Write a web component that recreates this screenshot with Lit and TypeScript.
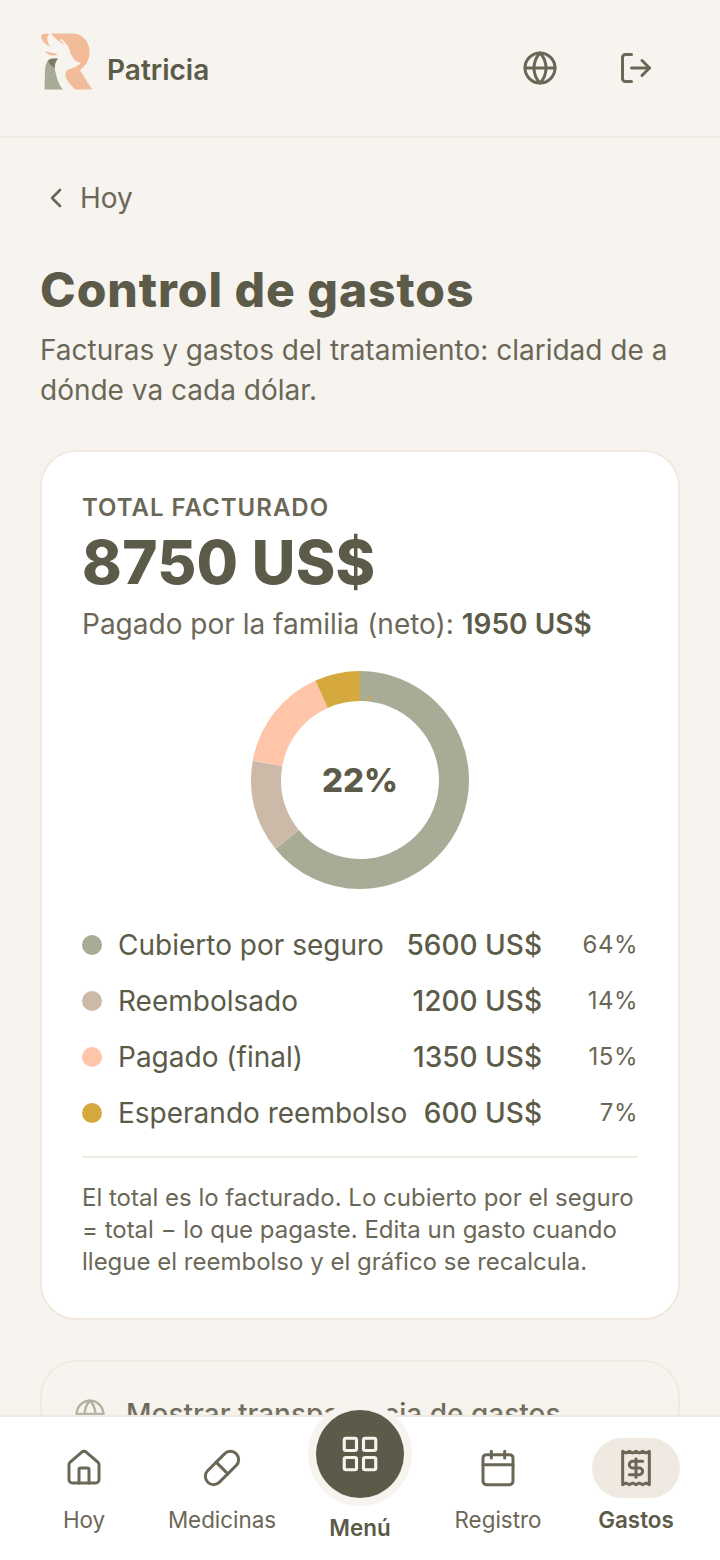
import { LitElement, html, css, svg } from "lit";
import { customElement } from "lit/decorators.js";

const ic = (size: number, body: unknown, sw = 2) => html`<svg width=${size} height=${size} viewBox="0 0 24 24" fill="none" stroke="currentColor" stroke-width=${sw} stroke-linecap="round" stroke-linejoin="round">${body}</svg>`;

const globe = svg`<circle cx="12" cy="12" r="10"/><path d="M12 2a14.5 14.5 0 0 0 0 20 14.5 14.5 0 0 0 0-20"/><path d="M2 12h20"/>`;
const logout = svg`<path d="M9 21H5a2 2 0 0 1-2-2V5a2 2 0 0 1 2-2h4"/><path d="m16 17 5-5-5-5"/><path d="M21 12H9"/>`;
const chevron = svg`<path d="m15 18-6-6 6-6"/>`;
const house = svg`<path d="M15 21v-8a1 1 0 0 0-1-1h-4a1 1 0 0 0-1 1v8"/><path d="M3 10a2 2 0 0 1 .709-1.528l7-5.999a2 2 0 0 1 2.582 0l7 5.999A2 2 0 0 1 21 10v9a2 2 0 0 1-2 2H5a2 2 0 0 1-2-2z"/>`;
const pill = svg`<path d="m10.5 20.5 10-10a4.95 4.95 0 1 0-7-7l-10 10a4.95 4.95 0 1 0 7 7Z"/><path d="m8.5 8.5 7 7"/>`;
const grid = svg`<rect width="7" height="7" x="3" y="3" rx="1"/><rect width="7" height="7" x="14" y="3" rx="1"/><rect width="7" height="7" x="14" y="14" rx="1"/><rect width="7" height="7" x="3" y="14" rx="1"/>`;
const calendar = svg`<path d="M8 2v4"/><path d="M16 2v4"/><rect width="18" height="18" x="3" y="4" rx="2"/><path d="M3 10h18"/>`;
const receipt = svg`<path d="M4 2v20l2-1 2 1 2-1 2 1 2-1 2 1 2-1 2 1V2l-2 1-2-1-2 1-2-1-2 1-2-1-2 1Z"/><path d="M16 8h-6a2 2 0 1 0 0 4h4a2 2 0 1 1 0 4H8"/><path d="M12 17.5v-11"/>`;

const rows = [
  { label: "Cubierto por seguro", amount: "5600 US$", value: 5600, pct: 64, color: "#a8ab95" },
  { label: "Reembolsado", amount: "1200 US$", value: 1200, pct: 14, color: "#cdb9a8" },
  { label: "Pagado (final)", amount: "1350 US$", value: 1350, pct: 15, color: "#fec5a8" },
  { label: "Esperando reembolso", amount: "600 US$", value: 600, pct: 7, color: "#d6a93f" },
];

@customElement("app-root")
export class AppRoot extends LitElement {
  static styles = css`
    :host { display: flex; flex-direction: column; width: 720px; height: 1560px; overflow: hidden; background: #f7f4ef; color: #5c5a48; font-family: Inter, "Liberation Sans", sans-serif; }
    * { box-sizing: border-box; }
    svg { display: block; flex: none; }
    header { flex: none; height: 138px; border-bottom: 2px solid #f0e9e1; display: flex; align-items: center; padding: 0 48px 0 40px; }
    .brand { flex: 1; display: flex; align-items: center; gap: 14px; }
    .name { font-size: 28px; font-weight: 600; line-height: 36px; margin-top: 3px; }
    .actions { display: flex; gap: 24px; color: #6b6757; }
    .btn { width: 72px; height: 72px; display: flex; align-items: center; justify-content: center; }
    main { flex: 1; min-height: 0; overflow: hidden; padding: 36px 40px 0; position: relative; }
    main::after { content: ""; position: absolute; left: 0; right: 0; bottom: 0; height: 20px; background: linear-gradient(rgba(240,233,225,0), rgba(240,233,225,.2)); }
    .back { height: 48px; display: flex; align-items: center; gap: 8px; font-size: 28px; color: #6b6757; }
    h1 { margin: 38px 0 0; font-size: 48px; line-height: 60px; font-weight: 800; letter-spacing: 0.95px; }
    .sub { margin: 10px 0 0; font-size: 28px; line-height: 40px; color: #6b6757; }
    .card { margin-top: 40px; border: 2px solid #f0e9e1; border-radius: 36px; background: #fff; padding: 40px; }
    .eyebrow { font-size: 24px; line-height: 30px; font-weight: 600; letter-spacing: 1px; color: #6b6757; margin-top: 1px; }
    .total { margin-top: 5px; font-size: 60px; line-height: 68px; font-weight: 800; letter-spacing: 0.3px; }
    .paid { margin-top: 10px; font-size: 28px; line-height: 36px; color: #6b6757; }
    .paid b { font-weight: 600; color: #5c5a48; }
    .donut { position: relative; width: 220px; height: 220px; margin: 28px auto 0; }
    .donut span { position: absolute; inset: 0; display: flex; align-items: center; justify-content: center; font-size: 33px; font-weight: 800; }
    .legend { margin-top: 35px; display: flex; flex-direction: column; gap: 16px; }
    .row { height: 40px; display: flex; align-items: center; }
    .dot { width: 20px; height: 20px; border-radius: 50%; margin-right: 16px; flex: none; }
    .label { flex: 1; font-size: 28px; line-height: 38px; white-space: nowrap; }
    .amount { font-size: 28px; line-height: 38px; font-weight: 500; white-space: nowrap; }
    .pct { width: 96px; text-align: right; font-size: 24px; line-height: 38px; letter-spacing: .5px; color: #6b6757; }
    .note { margin-top: 23px; border-top: 2px solid #f0e9e1; padding-top: 24px; font-size: 24px; line-height: 32px; color: #6b6757; }
    .card2 { background: transparent; padding: 32px; display: flex; gap: 20px; height: 200px; align-items: flex-start; }
    .card2 .gl { color: #a8ab95; margin-top: 4px; }
    .card2 div { font-size: 28px; font-weight: 500; line-height: 40px; white-space: nowrap; }
    nav { flex: none; height: 145px; background: #fff; border-top: 2px solid #f0e9e1; padding: 21px 15px 0; display: grid; grid-template-columns: repeat(5, 138px); position: relative; z-index: 1; }
    .item { display: flex; flex-direction: column; align-items: center; font-size: 22.4px; line-height: 28px; color: #6b6757; white-space: nowrap; }
    .pillbox { width: 88px; height: 60px; border-radius: 30px; display: flex; align-items: center; justify-content: center; margin-bottom: 8px; }
    .on { font-weight: 600; color: #5c5a48; }
    .on .pillbox { background: #f0e9e1; color: #6b6757; }
    .fab { width: 88px; height: 88px; border-radius: 50%; background: #5c5a48; box-shadow: 0 0 0 8px #f7f4ef; color: #f7f4ef; display: flex; align-items: center; justify-content: center; margin: -28px 0 16px; }
  `;

  render() {
    let off = 0;
    const c = 2 * Math.PI * 94;
    return html`
      <header>
        <div class="brand">
          <svg width="53" height="72" viewBox="40 32 53 72">
            <defs>
              <pattern id="dots" width="3" height="3" patternUnits="userSpaceOnUse"><circle cx="1.5" cy="1.5" r=".55" fill="#c9c2a6"/></pattern>
            </defs>
            <path fill="#f4bb99" d="M51 33.500L72 33.500C82 33.500 89.500 41 89.500 52C89.500 61 85 66 80 70L92 89.500L75 89.500C71 85 66.500 81 65.500 76C65 72 67 69.500 70 69C74 68 78 66 81 63C77 62 74 60 72 56C70 53 68.500 50 68 47C63 44 55 39 51 33.500Z"/>
            <path fill="url(#dots)" d="M55 33.500L72 33.500C80 33.500 85 37 87 43C78 45 68 46 63 42C59 39 57 36 55 33.500ZM72 78L80 71L92 89.500L75 89.500Z"/>
            <path fill="none" stroke="#f7f4ef" stroke-width="1.600" stroke-linecap="round" d="M50 36C56 41 61 46 66 52M61 40C65 43 68 46 69.500 52"/>
            <path fill="#f4bb99" d="M41 35.500C42 34 46 33.500 49.500 34C46 36.500 47 41 50 46.500C46 45 40.500 40 41 35.500ZM45 51.500C49 52.500 54 52.500 58 54.500C54 56.500 48 55.500 45 51.500Z"/>
            <path fill="#a8ab95" d="M44.500 89.500L45 70C45.500 63 48 58.500 52 58.500L58 58.500C55 62 54 68 56 74C57 80 60 86 63 89.500Z"/>
            <path fill="#7d7a68" d="M48 61C50 58.500 54 58.500 58 58.500C55.500 61 54.500 64 54.500 68C52 66 49 64 48 61Z"/>
          </svg>
          <span class="name">Patricia</span>
        </div>
        <div class="actions">
          <div class="btn">${ic(36, globe, 2)}</div>
          <div class="btn">${ic(36, logout, 2)}</div>
        </div>
      </header>
      <main>
        <div class="back">${ic(32, chevron, 2)}<span>Hoy</span></div>
        <h1>Control de gastos</h1>
        <p class="sub">Facturas y gastos del tratamiento: claridad de a dónde va cada dólar.</p>
        <section class="card">
          <div class="eyebrow">TOTAL FACTURADO</div>
          <div class="total">8750 US$</div>
          <div class="paid">Pagado por la familia (neto): <b>1950 US$</b></div>
          <div class="donut">
            <svg width="220" height="220" viewBox="0 0 220 220">
              <g transform="rotate(-90 110 110)">
              ${rows.map((r) => {
                const len = (r.value / 8750) * c;
                const el = svg`<circle cx="110" cy="110" r="94" fill="none" stroke=${r.color} stroke-width="30" stroke-dasharray="${len} ${c - len}" stroke-dashoffset=${-off} />`;
                off += len;
                return el;
              })}
              </g>
              <path fill="#d6a93f" d="M115 31L117.500 28.500L121 25L119.500 30Z"/>
            </svg>
            <span>22%</span>
          </div>
          <div class="legend">
            ${rows.map((r) => html`<div class="row"><i class="dot" style="background:${r.color}"></i><span class="label">${r.label}</span><span class="amount">${r.amount}</span><span class="pct">${r.pct}%</span></div>`)}
          </div>
          <div class="note">El total es lo facturado. Lo cubierto por el seguro = total − lo que pagaste. Edita un gasto cuando llegue el reembolso y el gráfico se recalcula.</div>
        </section>
        <section class="card card2">
          <span class="gl">${ic(32, globe, 1.8)}</span>
          <div>Mostrar transparencia de gastos</div>
        </section>
      </main>
      <nav>
        <div class="item"><div class="pillbox">${ic(40, house, 1.8)}</div>Hoy</div>
        <div class="item"><div class="pillbox">${ic(40, pill, 1.8)}</div>Medicinas</div>
        <div class="item on"><div class="fab">${ic(42, grid, 1.8)}</div>Menú</div>
        <div class="item"><div class="pillbox">${ic(40, calendar, 1.8)}</div>Registro</div>
        <div class="item on"><div class="pillbox">${ic(40, receipt, 1.8)}</div>Gastos</div>
      </nav>
    `;
  }
}
